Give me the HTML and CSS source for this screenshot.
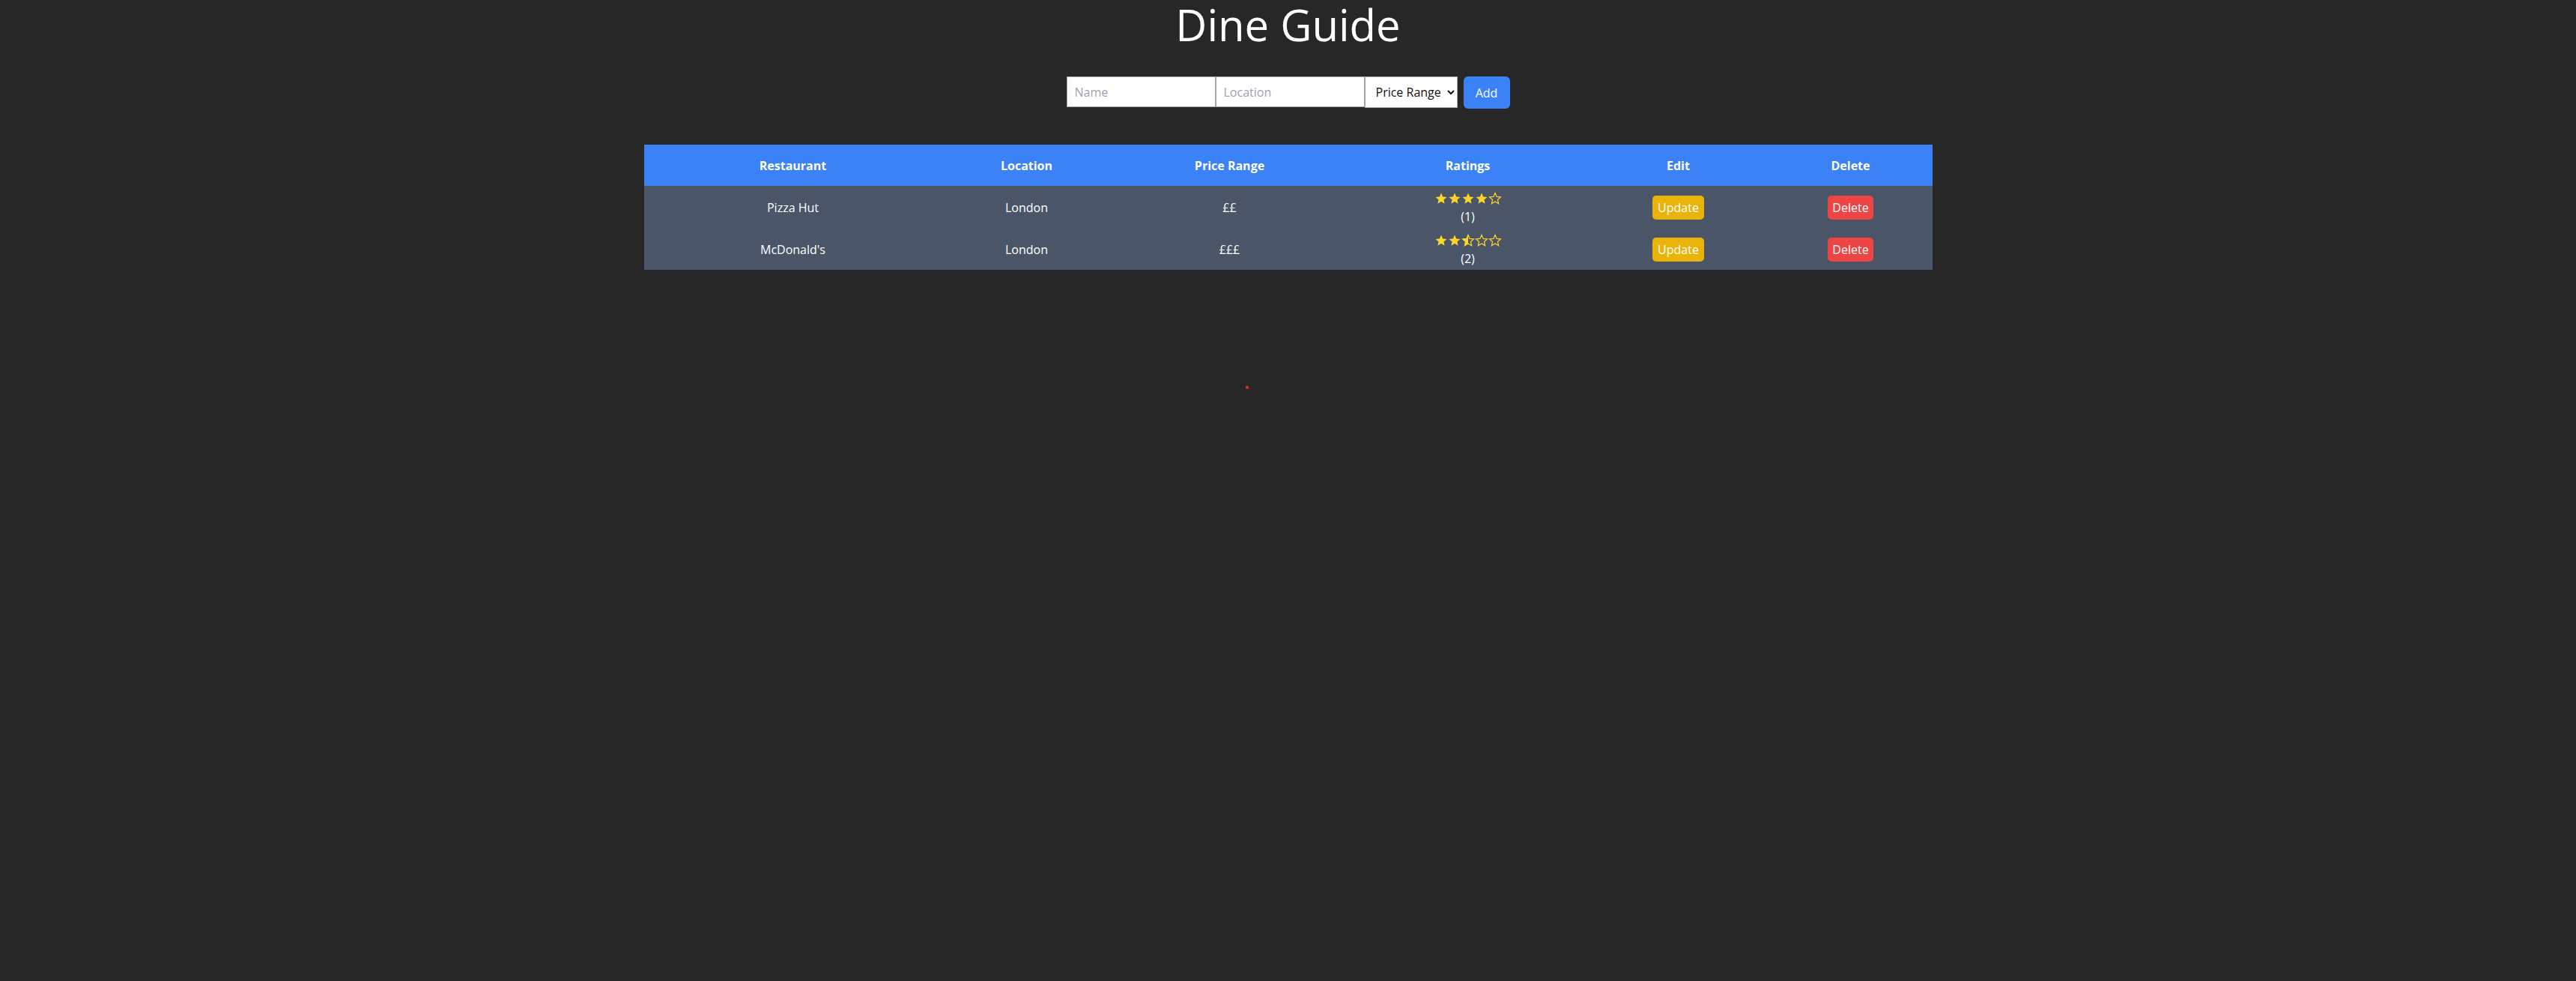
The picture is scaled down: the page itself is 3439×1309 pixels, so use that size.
FILE: index.html
```html
<!DOCTYPE html>
<html lang="en">
<head>
<meta charset="utf-8">
<title>Dine Guide</title>
<link rel="stylesheet" href="styles.css">
</head>
<body>
<svg class="defs" width="0" height="0" aria-hidden="true">
  <defs>
    <path id="star" d="M12 2L14.82 8.62 21.99 9.26 16.57 13.98 18.17 20.99 12 17.3 5.83 20.99 7.43 13.98 2.01 9.26 9.18 8.62Z"/>
    <path id="half" d="M12 2L9.18 8.62 2.01 9.26 7.43 13.98 5.83 20.99 12 17.3Z"/>
  </defs>
</svg>
<div class="app">
  <h1 class="title">Dine Guide</h1>
  <form class="add-form">
    <input class="field field-name" type="text" placeholder="Name">
    <input class="field field-location" type="text" placeholder="Location">
    <select class="field field-price">
      <option>Price Range</option>
      <option>£</option>
      <option>££</option>
      <option>£££</option>
      <option>££££</option>
      <option>£££££</option>
    </select>
    <button class="btn btn-add" type="button">Add</button>
  </form>

  <table class="list">
    <thead>
      <tr>
        <th class="c-rest">Restaurant</th>
        <th class="c-loc">Location</th>
        <th class="c-price">Price Range</th>
        <th class="c-rate">Ratings</th>
        <th class="c-edit">Edit</th>
        <th class="c-del">Delete</th>
      </tr>
    </thead>
    <tbody>
      <tr>
        <td>Pizza Hut</td>
        <td>London</td>
        <td>££</td>
        <td>
          <div class="stars">
            <svg class="s" viewBox="0 0 24 24"><use href="#star" class="full"/></svg>
            <svg class="s" viewBox="0 0 24 24"><use href="#star" class="full"/></svg>
            <svg class="s" viewBox="0 0 24 24"><use href="#star" class="full"/></svg>
            <svg class="s" viewBox="0 0 24 24"><use href="#star" class="full"/></svg>
            <svg class="s" viewBox="0 0 24 24"><use href="#star" class="empty"/></svg>
          </div>
          <div class="count">(1)</div>
        </td>
        <td><button class="btn btn-update" type="button">Update</button></td>
        <td><button class="btn btn-delete" type="button">Delete</button></td>
      </tr>
      <tr>
        <td>McDonald's</td>
        <td>London</td>
        <td>£££</td>
        <td>
          <div class="stars">
            <svg class="s" viewBox="0 0 24 24"><use href="#star" class="full"/></svg>
            <svg class="s" viewBox="0 0 24 24"><use href="#star" class="full"/></svg>
            <svg class="s" viewBox="0 0 24 24"><use href="#star" class="empty"/><use href="#half" class="full"/></svg>
            <svg class="s" viewBox="0 0 24 24"><use href="#star" class="empty"/></svg>
            <svg class="s" viewBox="0 0 24 24"><use href="#star" class="empty"/></svg>
          </div>
          <div class="count">(2)</div>
        </td>
        <td><button class="btn btn-update" type="button">Update</button></td>
        <td><button class="btn btn-delete" type="button">Delete</button></td>
      </tr>
    </tbody>
  </table>

  <div class="dot"></div>
</div>
</body>
</html>
```

FILE: styles.css
```css
html, body {
  margin: 0;
  padding: 0;
}

body {
  background: #272727;
  color: #ffffff;
  font-family: "Open Sans", "Noto Sans", "Liberation Sans", sans-serif;
  font-size: 16px;
}

.defs {
  position: absolute;
  width: 0;
  height: 0;
  overflow: hidden;
}

.app {
  display: flex;
  flex-direction: column;
  align-items: center;
}

.title {
  margin: 0;
  font-size: 58px;
  font-weight: 400;
  line-height: 66px;
  color: #ffffff;
}

.add-form {
  margin-top: 36px;
  display: flex;
  align-items: flex-start;
}

.field {
  box-sizing: border-box;
  height: 41px;
  margin: 0;
  border: 1.5px solid #a6a6a6;
  border-radius: 0;
  background: #ffffff;
  color: #111;
  font-family: inherit;
  font-size: 16px;
  padding: 0 10px;
  outline: none;
}

.field::placeholder {
  color: #9ca3af;
}

.field-name,
.field-location {
  width: 199px;
}

.field-price {
  width: 124px;
  height: 42px;
  padding: 0 6px 0 10px;
}

.btn {
  border: none;
  margin: 0;
  font-family: inherit;
  font-size: 16px;
  color: #ffffff;
  cursor: pointer;
}

.btn-add {
  margin-left: 8px;
  width: 62px;
  height: 43px;
  border-radius: 6px;
  background: #3b82f6;
}

.list {
  margin-top: 48px;
  width: 1720px;
  border-collapse: collapse;
  table-layout: fixed;
}

.list th {
  background: #3b82f6;
  color: #ffffff;
  font-weight: 700;
  height: 55px;
  padding: 0;
  line-height: 22px;
  text-align: center;
}

.c-rest { width: 398px; }
.c-loc { width: 226px; }
.c-price { width: 316px; }
.c-rate { width: 320px; }
.c-edit { width: 242px; }
.c-del { width: 218px; }

.list td {
  background: #4a5568;
  text-align: center;
  vertical-align: middle;
  padding: 5px 0 3px;
  height: 48px;
  line-height: 24px;
}

.stars {
  display: flex;
  justify-content: center;
  height: 24px;
  align-items: center;
}

.s {
  width: 18px;
  height: 18px;
  display: block;
}

.full {
  fill: #fbd629;
  stroke: none;
}

.empty {
  fill: none;
  stroke: #fbd629;
  stroke-width: 1.6;
  stroke-linejoin: miter;
}

.count {
  line-height: 24px;
}

.btn-update,
.btn-delete {
  height: 32px;
  border-radius: 5px;
  padding: 0;
  line-height: 32px;
}

.btn-update {
  width: 69px;
  background: #eab308;
}

.btn-delete {
  width: 61px;
  background: #ef4444;
}

.dot {
  margin-top: 155px;
  margin-right: 110px;
  width: 4px;
  height: 4px;
  border-radius: 50%;
  background: #d9302c;
  box-shadow: 0 0 2px #b02020;
}
```
